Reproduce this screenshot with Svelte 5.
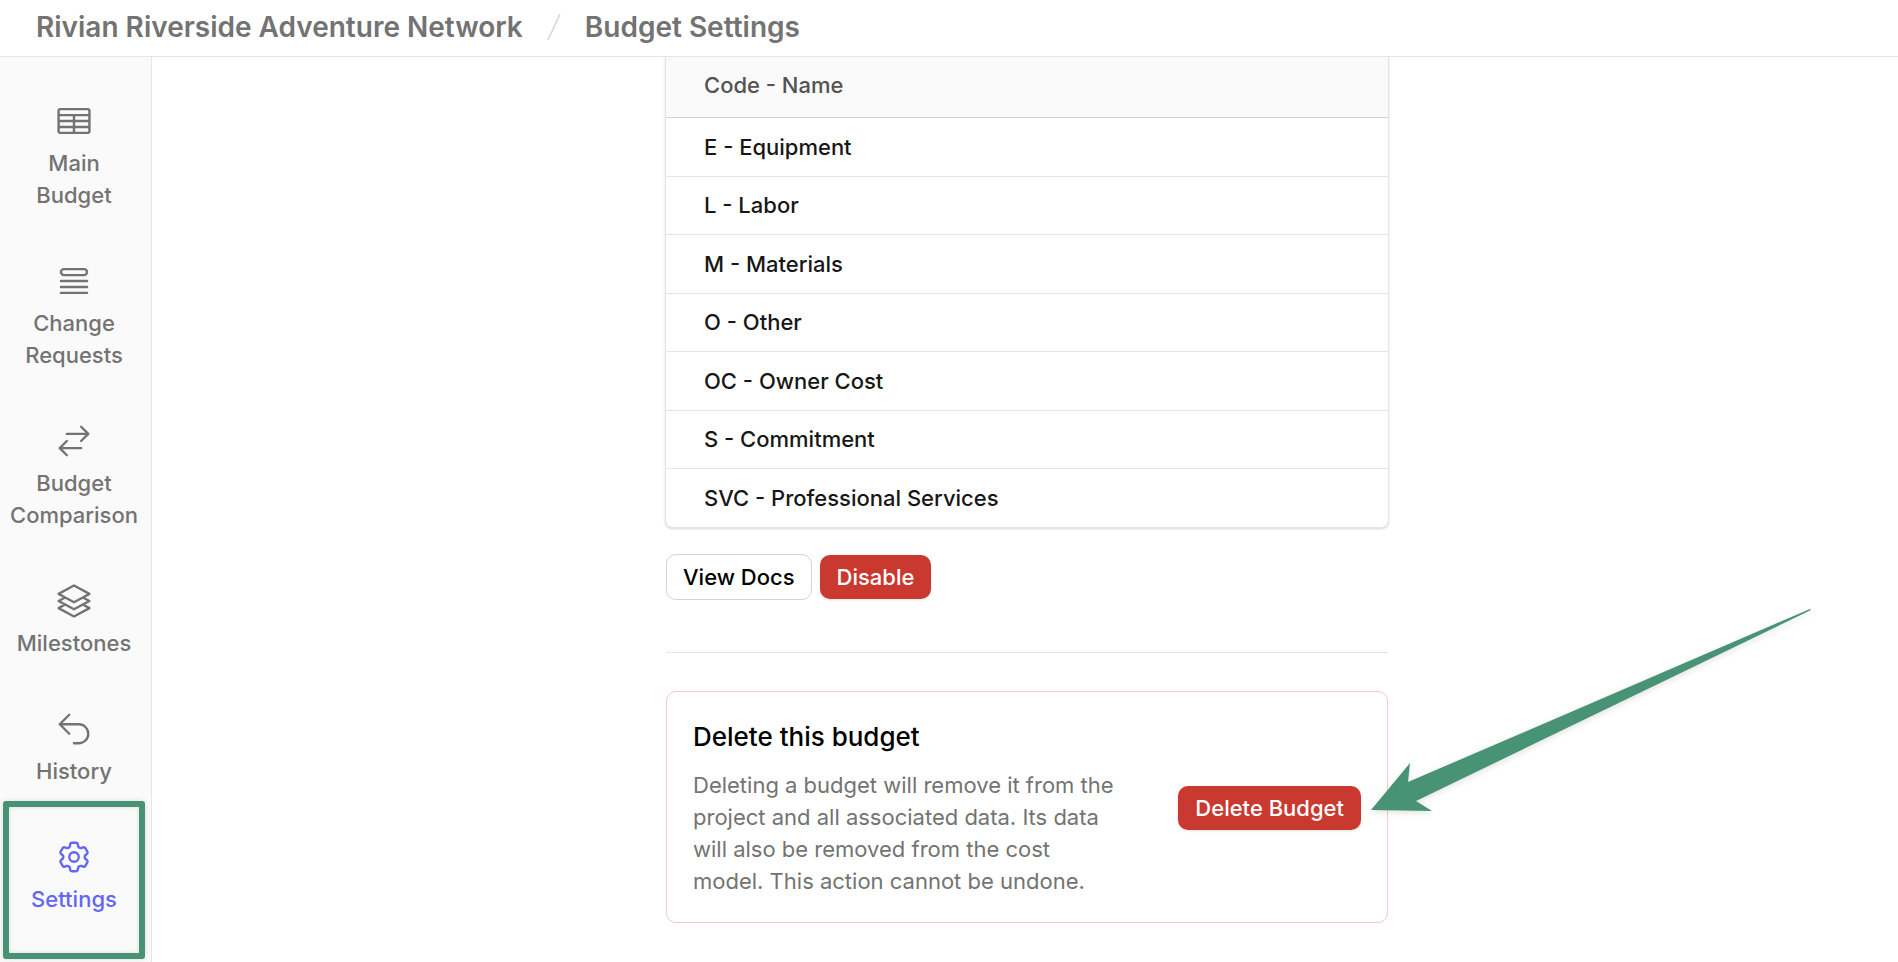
<script>
  const navItems = [
    {
      label: 'Main Budget',
      path: 'M3.375 19.5h17.25m-17.25 0a1.125 1.125 0 0 1-1.125-1.125M3.375 19.5h7.5c.621 0 1.125-.504 1.125-1.125m-9.75 0V5.625m0 12.75v-1.5c0-.621.504-1.125 1.125-1.125m18.375 2.625V5.625m0 12.75c0 .621-.504 1.125-1.125 1.125m1.125-1.125v-1.5c0-.621-.504-1.125-1.125-1.125m0 3.75h-7.5A1.125 1.125 0 0 1 12 18.375m9.75-12.75c0-.621-.504-1.125-1.125-1.125H3.375c-.621 0-1.125.504-1.125 1.125m19.5 0v1.5c0 .621-.504 1.125-1.125 1.125M2.25 5.625v1.5c0 .621.504 1.125 1.125 1.125m0 0h17.25m-17.25 0h7.5c.621 0 1.125.504 1.125 1.125M3.375 8.25c-.621 0-1.125.504-1.125 1.125v1.5c0 .621.504 1.125 1.125 1.125m17.25-3.75h-7.5c-.621 0-1.125.504-1.125 1.125m8.625-1.125c.621 0 1.125.504 1.125 1.125v1.5c0 .621-.504 1.125-1.125 1.125m-17.25 0h7.5m-7.5 0c-.621 0-1.125.504-1.125 1.125v1.5c0 .621.504 1.125 1.125 1.125M12 10.875v-1.5m0 1.5c0 .621-.504 1.125-1.125 1.125M12 10.875c0 .621.504 1.125 1.125 1.125m-2.25 0c.621 0 1.125.504 1.125 1.125M13.125 12h7.5m-7.5 0c-.621 0-1.125.504-1.125 1.125M20.625 12c.621 0 1.125.504 1.125 1.125v1.5c0 .621-.504 1.125-1.125 1.125m-17.25 0h7.5M12 14.625v-1.5m0 1.5c0 .621-.504 1.125-1.125 1.125M12 14.625c0 .621.504 1.125 1.125 1.125m-2.25 0c.621 0 1.125.504 1.125 1.125m0 1.5v-1.5m0 0c0-.621.504-1.125 1.125-1.125m0 0h7.5'
    },
    {
      label: 'Change Requests',
      path: 'M3.75 12h16.5m-16.5 3.75h16.5M3.75 19.5h16.5M5.625 4.5h12.75a1.875 1.875 0 0 1 0 3.75H5.625a1.875 1.875 0 0 1 0-3.75Z'
    },
    {
      label: 'Budget Comparison',
      path: 'M7.5 21 3 16.5m0 0L7.5 12M3 16.5h13.5m0-13.5L21 7.5m0 0L16.5 12M21 7.5H7.5'
    },
    {
      label: 'Milestones',
      path: 'M6.429 9.75 2.25 12l4.179 2.25m0-4.5 5.571 3 5.571-3m-11.142 0L2.25 7.5 12 2.25l9.75 5.25-4.179 2.25m0 0L21.75 12l-4.179 2.25m0 0 4.179 2.25L12 21.75 2.25 16.5l4.179-2.25m11.142 0-5.571 3-5.571-3'
    },
    {
      label: 'History',
      path: 'M9 15 3 9m0 0 6-6M3 9h12a6 6 0 0 1 0 12h-3'
    },
    {
      label: 'Settings',
      active: true,
      path: 'M9.594 3.94c.09-.542.56-.94 1.11-.94h2.593c.55 0 1.02.398 1.11.94l.213 1.281c.063.374.313.686.645.87.074.04.147.083.22.127.325.196.72.257 1.075.124l1.217-.456a1.125 1.125 0 0 1 1.37.49l1.296 2.247a1.125 1.125 0 0 1-.26 1.431l-1.003.827c-.293.241-.438.613-.43.992a7.723 7.723 0 0 1 0 .255c-.008.378.137.75.43.991l1.004.827c.424.35.534.955.26 1.43l-1.298 2.247a1.125 1.125 0 0 1-1.369.491l-1.217-.456c-.355-.133-.75-.072-1.076.124a6.47 6.47 0 0 1-.22.128c-.331.183-.581.495-.644.869l-.213 1.281c-.09.543-.56.94-1.11.94h-2.594c-.55 0-1.019-.398-1.11-.94l-.213-1.281c-.062-.374-.312-.686-.644-.87a6.52 6.52 0 0 1-.22-.127c-.325-.196-.72-.257-1.076-.124l-1.217.456a1.125 1.125 0 0 1-1.369-.49l-1.297-2.247a1.125 1.125 0 0 1 .26-1.431l1.004-.827c.292-.24.437-.613.43-.991a6.932 6.932 0 0 1 0-.255c.007-.38-.138-.751-.43-.992l-1.004-.827a1.125 1.125 0 0 1-.26-1.43l1.297-2.247a1.125 1.125 0 0 1 1.37-.491l1.216.456c.356.133.751.072 1.076-.124.072-.044.146-.086.22-.128.332-.183.582-.495.644-.869l.214-1.28ZM15 12a3 3 0 1 1-6 0 3 3 0 0 1 6 0Z'
    }
  ];

  const costTypes = [
    ['E', 'Equipment'],
    ['L', 'Labor'],
    ['M', 'Materials'],
    ['O', 'Other'],
    ['OC', 'Owner Cost'],
    ['S', 'Commitment'],
    ['SVC', 'Professional Services']
  ];
</script>

<div class="app">
  <header>
    <a href="#project">Rivian Riverside Adventure Network</a>
    <svg class="slash" viewBox="0 0 14 28" aria-hidden="true"><path d="M1 27 13 1" /></svg>
    <a href="#settings" aria-current="page">Budget Settings</a>
  </header>

  <div class="body">
    <nav>
      {#each navItems as item}
        <a href="#{item.label}" class="item" class:active={item.active}>
          <svg class="icon" viewBox="0 0 24 24" aria-hidden="true"><path d={item.path} /></svg>
          <span>{item.label}</span>
          {#if item.active}<i class="highlight"></i>{/if}
        </a>
      {/each}
    </nav>

    <main>
      <div class="column">
        <div class="table-card">
          <table>
            <thead>
              <tr><th scope="col">Code - Name</th></tr>
            </thead>
            <tbody>
              {#each costTypes as [code, name]}
                <tr><td>{code} - {name}</td></tr>
              {/each}
            </tbody>
          </table>
        </div>

        <div class="actions">
          <button type="button" class="outline">View Docs</button>
          <button type="button" class="danger">Disable</button>
        </div>

        <hr />

        <section class="delete-card">
          <div class="copy">
            <h2>Delete this budget</h2>
            <p>
              Deleting a budget will remove it from the project and all associated data. Its data will
              also be removed from the cost model. This action cannot be undone.
            </p>
          </div>
          <button type="button" class="danger">Delete Budget</button>
          <svg class="arrow" viewBox="0 0 442 206" aria-hidden="true">
            <path d="M1 202 40 155 38 174 440 1 441 2 46 193 62 203Z" />
          </svg>
        </section>
      </div>
    </main>
  </div>
</div>

<style>
  :global(body) {
    margin: 0;
    background: #fff;
  }

  .app {
    display: flex;
    flex-direction: column;
    min-height: 100vh;
    font-family: Inter, sans-serif;
    font-size: 22px;
    line-height: 32px;
    font-weight: 500;
    color: #171717;
  }

  a {
    color: #737373;
    text-decoration: none;
  }

  header {
    position: relative;
    z-index: 1;
    display: flex;
    align-items: center;
    gap: 24px;
    padding: 11px 36px 13px;
    border-bottom: 1px solid #e5e5e5;
    background: #fff;
    font-size: 28px;
    font-weight: 600;
  }

  .slash {
    width: 14px;
    height: 28px;
    fill: none;
    stroke: #d4d4d4;
    stroke-width: 1.5;
  }

  .body {
    display: flex;
    flex: 1;
  }

  nav {
    flex: none;
    width: 148px;
    padding: 20px 3px 0 0;
    border-right: 1px solid #e5e5e5;
    background: #fafafa;
  }

  .item {
    position: relative;
    display: flex;
    flex-direction: column;
    align-items: center;
    gap: 7px;
    padding: 25px 8px 26px;
    text-align: center;
  }

  .icon {
    width: 38px;
    height: 38px;
    fill: none;
    stroke: currentColor;
    stroke-width: 1.5;
    stroke-linecap: round;
    stroke-linejoin: round;
  }

  .active {
    color: #6366f1;
  }

  .highlight {
    position: absolute;
    inset: -12px 3px -18px;
    border: 6px solid #489276;
    border-radius: 3px;
    box-shadow:
      0 0 5px rgb(0 0 0 / 0.12),
      inset 0 0 5px rgb(0 0 0 / 0.12);
  }

  main {
    flex: 1;
    padding: 0 24px 38px 28px;
  }

  .column {
    max-width: 722px;
    margin: 0 auto;
  }

  .table-card {
    overflow: hidden;
    border-radius: 0 0 6px 6px;
    box-shadow:
      0 0 0 1px #e5e5e5,
      0 1px 0 1px #e3e3e3,
      0 1px 3px 1px rgb(0 0 0 / 0.12);
  }

  table {
    width: 100%;
    border-collapse: separate;
    border-spacing: 0;
  }

  th,
  td {
    box-sizing: border-box;
    height: 58px;
    padding: 0 38px 1px;
    border-bottom: 1px solid #e5e5e5;
    text-align: left;
    font-weight: 500;
  }

  th {
    height: 61px;
    padding-bottom: 4px;
    border-color: #d4d4d4;
    background: #fafafa;
    color: #525252;
  }

  tr:nth-child(odd) td {
    height: 59px;
  }

  tr:last-child td {
    height: 58px;
    border-bottom: 0;
  }

  .actions {
    display: flex;
    align-items: center;
    gap: 8px;
    margin-top: 27px;
  }

  button {
    flex: none;
    padding: 6px 16px;
    border: 0;
    border-radius: 10px;
    font: inherit;
    cursor: pointer;
  }

  .outline {
    border: 1px solid #d4d4d4;
    background: #fff;
    color: #000;
  }

  .danger {
    padding: 6px 17px;
    background: #c93930;
    color: #fff;
    box-shadow: 0 1px 3px rgb(0 0 0 / 0.12);
  }

  hr {
    margin: 52px 0 38px;
    border: 0;
    border-top: 1px solid #e5e5e5;
  }

  .delete-card {
    position: relative;
    display: flex;
    align-items: center;
    justify-content: space-between;
    gap: 58px;
    padding: 27px 26px 25px;
    border: 1px solid #f8c8c8;
    border-radius: 10px;
  }

  h2 {
    margin: 0 0 14px;
    font-size: 26px;
    line-height: 36px;
    font-weight: 500;
    color: #000;
  }

  p {
    margin: 0;
    font-weight: 400;
    color: #737373;
  }

  .arrow {
    position: absolute;
    top: -84px;
    left: calc(100% - 17px);
    width: 442px;
    height: 206px;
    overflow: visible;
    fill: #489276;
    filter: drop-shadow(0 2px 3px rgb(0 0 0 / 0.12));
    pointer-events: none;
  }
</style>
